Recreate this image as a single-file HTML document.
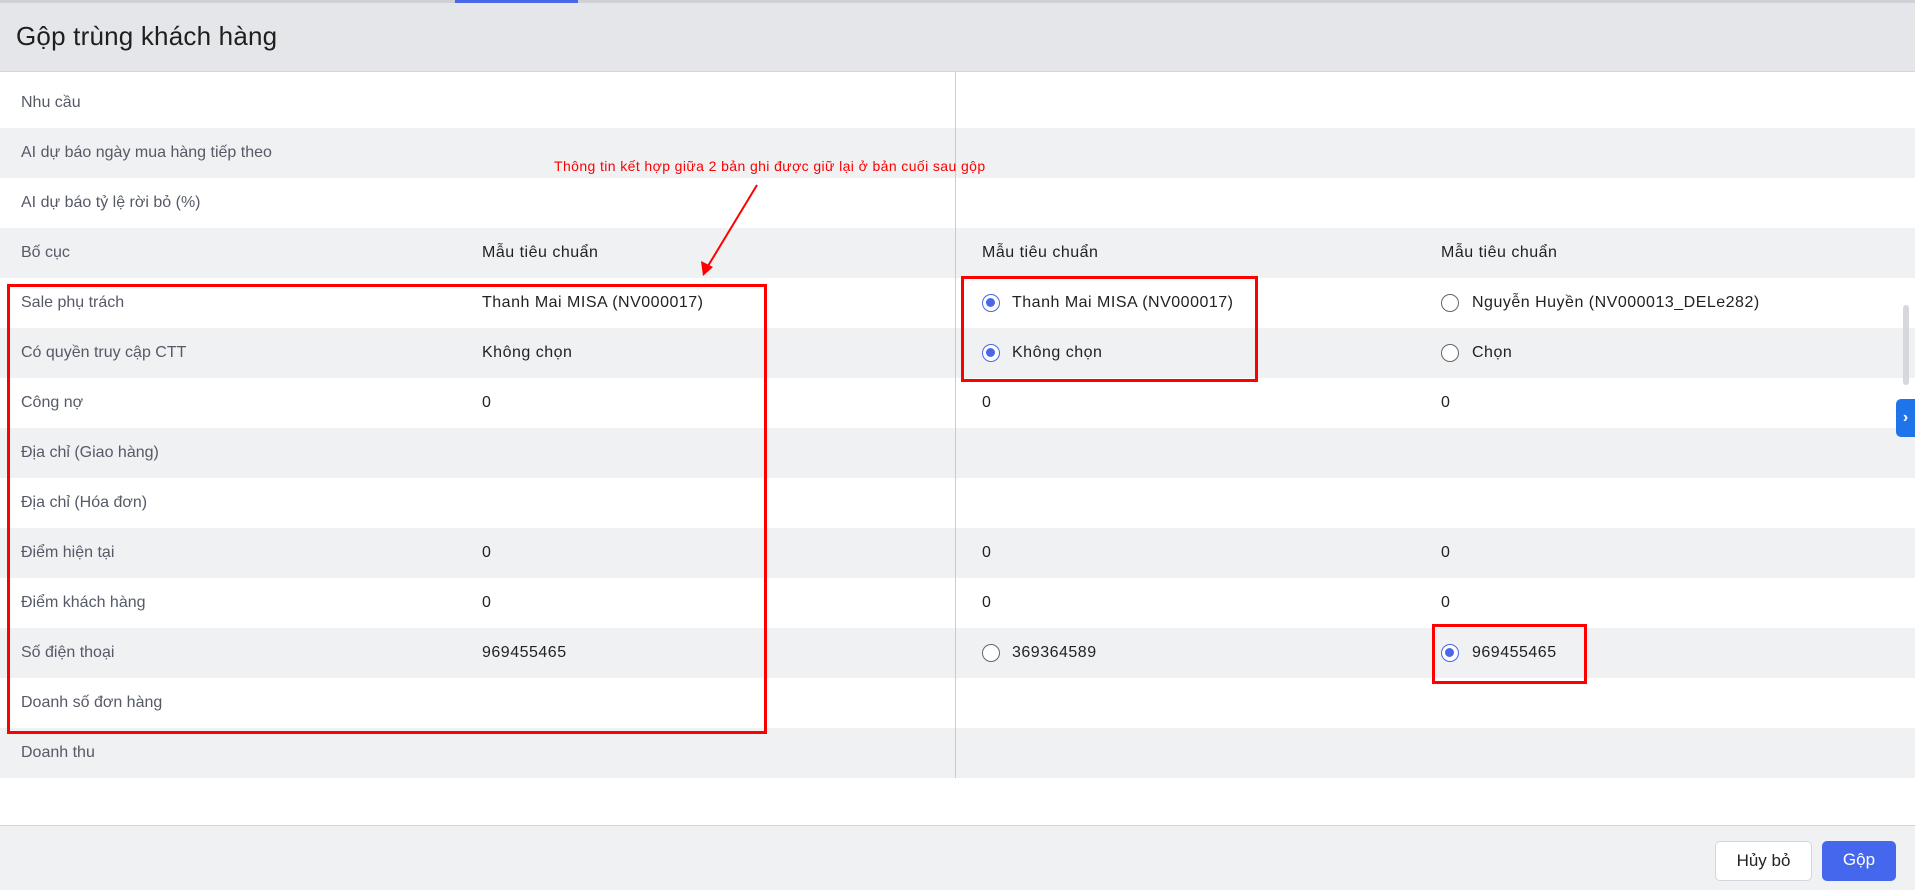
<!DOCTYPE html><html><head><meta charset="utf-8"><style>
*{margin:0;padding:0;box-sizing:border-box}
body{width:1915px;height:890px;position:relative;overflow:hidden;background:#fff;font-family:"Liberation Sans",sans-serif;}
.hdr{position:absolute;left:0;top:0;width:1915px;height:72px;background:#e4e6ea;border-bottom:1px solid #d4d6da}
.hdr h1{position:absolute;left:16px;top:21px;font-size:26px;font-weight:normal;color:#1f1f1f;letter-spacing:0.2px}
.top{position:absolute;left:0;top:0;width:1915px;height:3px;background:#cfd1d6}
.bl{position:absolute;left:455px;top:0;width:123px;height:3px;background:#4a67e8}
.row{position:absolute;left:0;width:1915px;height:50px;font-size:16px;line-height:50px;letter-spacing:0.5px}
.g{background:#f0f1f3}
.row span{position:absolute;top:0;white-space:nowrap}
.l{left:21px;color:#555a66;letter-spacing:0}
.c2{left:482px;color:#222}
.c3{left:982px;color:#222}
.c4{left:1441px;color:#222}
.r3{left:1012px;color:#222}.r4{left:1472px;color:#222}
.rd{position:absolute;top:16px;width:18px;height:18px;border-radius:50%;border:1.5px solid #666;background:#fff}
.rd.on{border-color:#4a67e8}
.rd.on::after{content:"";position:absolute;left:3px;top:3px;width:9px;height:9px;border-radius:50%;background:#4a67e8}
.div{position:absolute;left:955px;top:72px;width:1px;height:706px;background:#c8ccd4}
.box{position:absolute;border:3px solid #f00}
.foot{position:absolute;left:0;top:825px;width:1915px;height:65px;background:#f0f1f3;border-top:1px solid #d4d6da}
.btn{position:absolute;top:15px;height:40px;border-radius:5px;font-size:17px;line-height:38px;text-align:center}
</style></head><body>
<div class="hdr"><h1>Gộp trùng khách hàng</h1></div>
<div class="top"></div><div class="bl"></div>
<div class="row" style="top:78px"><span class="l">Nhu cầu</span></div>
<div class="row g" style="top:128px"><span class="l">AI dự báo ngày mua hàng tiếp theo</span></div>
<div class="row" style="top:178px"><span class="l">AI dự báo tỷ lệ rời bỏ (%)</span></div>
<div class="row g" style="top:228px"><span class="l">Bố cục</span><span class="c2">Mẫu tiêu chuẩn</span><span class="c3">Mẫu tiêu chuẩn</span><span class="c4">Mẫu tiêu chuẩn</span></div>
<div class="row" style="top:278px"><span class="l">Sale phụ trách</span><span class="c2">Thanh Mai MISA (NV000017)</span><i class="rd on" style="left:982px"></i><span class="r3">Thanh Mai MISA (NV000017)</span><i class="rd" style="left:1441px"></i><span class="r4">Nguyễn Huyền (NV000013_DELe282)</span></div>
<div class="row g" style="top:328px"><span class="l">Có quyền truy cập CTT</span><span class="c2">Không chọn</span><i class="rd on" style="left:982px"></i><span class="r3">Không chọn</span><i class="rd" style="left:1441px"></i><span class="r4">Chọn</span></div>
<div class="row" style="top:378px"><span class="l">Công nợ</span><span class="c2">0</span><span class="c3">0</span><span class="c4">0</span></div>
<div class="row g" style="top:428px"><span class="l">Địa chỉ (Giao hàng)</span></div>
<div class="row" style="top:478px"><span class="l">Địa chỉ (Hóa đơn)</span></div>
<div class="row g" style="top:528px"><span class="l">Điểm hiện tại</span><span class="c2">0</span><span class="c3">0</span><span class="c4">0</span></div>
<div class="row" style="top:578px"><span class="l">Điểm khách hàng</span><span class="c2">0</span><span class="c3">0</span><span class="c4">0</span></div>
<div class="row g" style="top:628px"><span class="l">Số điện thoại</span><span class="c2">969455465</span><i class="rd" style="left:982px"></i><span class="r3">369364589</span><i class="rd on" style="left:1441px"></i><span class="r4">969455465</span></div>
<div class="row" style="top:678px"><span class="l">Doanh số đơn hàng</span></div>
<div class="row g" style="top:728px"><span class="l">Doanh thu</span></div>
<div class="div"></div>
<div class="box" style="left:7px;top:284px;width:760px;height:450px"></div>
<div class="box" style="left:961px;top:276px;width:297px;height:106px"></div>
<div class="box" style="left:1432px;top:624px;width:155px;height:60px"></div>
<div style="position:absolute;left:554px;top:158px;font-size:14px;color:#f00;white-space:nowrap;letter-spacing:0.4px">Thông tin kết hợp giữa 2 bản ghi được giữ lại ở bản cuối sau gộp</div>
<svg style="position:absolute;left:0;top:0" width="1915" height="890"><line x1="757" y1="185" x2="708" y2="266" stroke="#f00" stroke-width="2"/><polygon points="703,276 701,261 713,267" fill="#f00"/></svg>
<div style="position:absolute;left:1903px;top:305px;width:6px;height:80px;border-radius:3px;background:#d6d8dc"></div>
<div style="position:absolute;left:1896px;top:399px;width:19px;height:38px;border-radius:5px 0 0 5px;background:#1e74e8;color:#fff;font-size:16px;line-height:38px;text-align:center;font-weight:bold">›</div>
<div class="foot">
<div class="btn" style="left:1715px;width:97px;background:#fff;border:1px solid #d4d6da;color:#222">Hủy bỏ</div>
<div class="btn" style="left:1822px;width:74px;background:#4567ee;color:#fff">Gộp</div>
</div>
</body></html>
